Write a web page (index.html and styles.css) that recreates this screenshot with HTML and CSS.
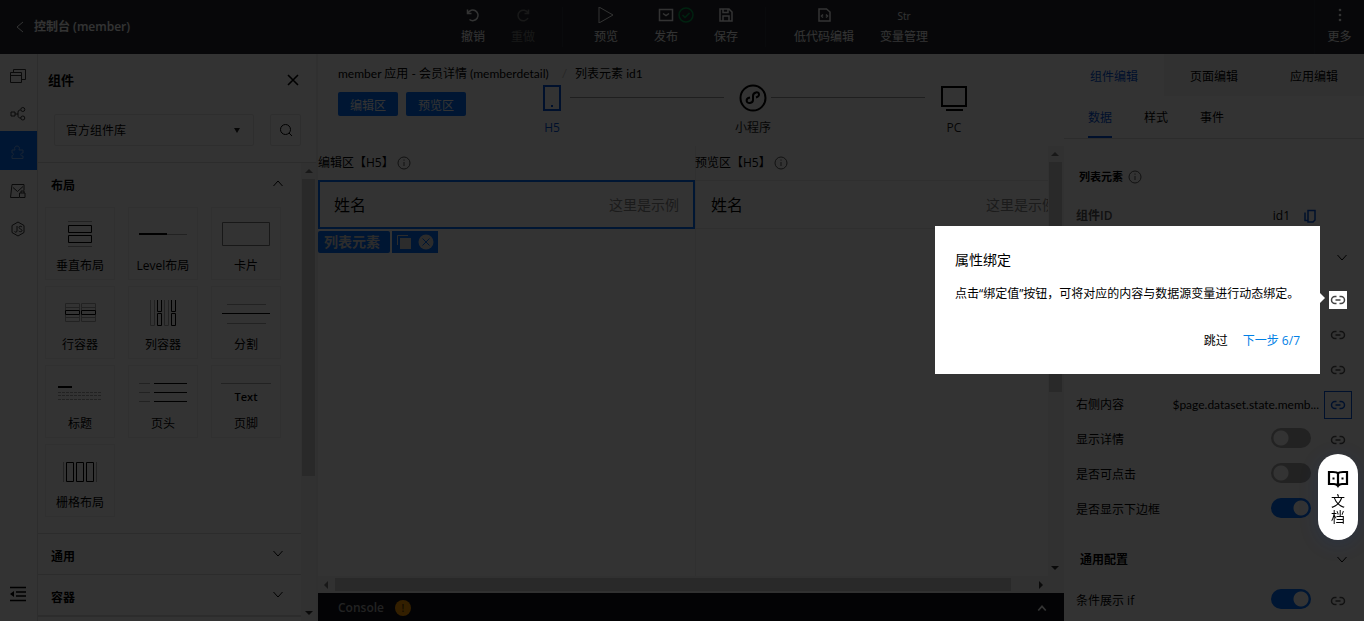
FILE: index.html
```html
<!DOCTYPE html>
<html lang="zh-CN">
<head>
<meta charset="utf-8">
<title>控制台</title>
<link rel="stylesheet" href="styles.css">
</head>
<body>
<svg class="defs" aria-hidden="true">
  <symbol id="link" viewBox="0 0 16 16"><path d="M6.500 11.500H5a3.500 3.500 0 0 1 0-7h1.500M9.500 4.500H11a3.500 3.500 0 0 1 0 7H9.500M5.500 8h5"/></symbol>
  <symbol id="down" viewBox="0 0 12 12"><path d="M1.500 3l4.500 5 4.500-5"/></symbol>
  <symbol id="up" viewBox="0 0 12 12"><path d="M1.500 9l4.500-5 4.500 5"/></symbol>
  <symbol id="info" viewBox="0 0 14 14"><circle cx="7" cy="7" r="6"/><path d="M7 6v4M7 3.500v1.200"/></symbol>
</svg>
<div class="app">
  <header class="top">
    <a class="back" href="#"><svg class="ico" width="10" height="12" viewBox="0 0 10 12"><path d="M8 1L2 6l6 5"/></svg>控制台 (member)</a>
    <nav class="tools">
      <button class="tool narrow"><svg class="ico" width="16" height="16" viewBox="0 0 16 16"><path d="M2.500 2.500v4h4M3 6a5.300 5.300 0 1 1 1.500 6.500" stroke-width="1.500"/></svg>撤销</button>
      <button class="tool narrow off"><svg class="ico" width="16" height="16" viewBox="0 0 16 16"><path d="M13.500 2.500v4h-4M13 6a5.300 5.300 0 1 0 0 5" stroke-width="1.500"/></svg>重做</button>
      <i class="sep"></i>
      <button class="tool"><svg class="ico" width="16" height="16" viewBox="0 0 16 16"><path d="M1 0l14 8-14 8z"/></svg>预览</button>
      <button class="tool"><svg class="ico" width="16" height="16" viewBox="0 0 16 16"><path d="M1.500 2.500h13v11h-13zM5 6.500l3 2 3-2" stroke-width="1.500"/></svg>发布<svg class="ok" width="16" height="16" viewBox="0 0 16 16"><circle cx="8" cy="8" r="7"/><path d="M4.500 8l2.500 2.500 4.500-4.500"/></svg></button>
      <button class="tool"><svg class="ico" width="16" height="16" viewBox="0 0 16 16"><path d="M2 2h9l3 3v9H2zM5 2v3.500h5V2M5 14V9h6v5" stroke-width="1.500"/></svg>保存</button>
      <i class="sep far"></i>
      <button class="tool wide"><svg class="ico" width="16" height="16" viewBox="0 0 16 16"><path d="M3 2h7.500L14 5v9H3zM7 7.500L5.500 9 7 10.500M10 7.500L11.500 9 10 10.500" stroke-width="1.500"/></svg>低代码编辑</button>
      <button class="tool wide"><span class="str">Str</span>变量管理</button>
    </nav>
    <button class="tool more"><svg class="dots" width="16" height="16" viewBox="0 0 16 16"><circle cx="8" cy="3" r="1.300"/><circle cx="8" cy="8" r="1.300"/><circle cx="8" cy="13" r="1.300"/></svg>更多</button>
  </header>
  <div class="body">
    <nav class="rail">
      <button class="railbtn" aria-label="页面"><svg class="ico" width="16" height="16" viewBox="0 0 16 16"><path d="M.500 4.500h11v10H.500zM.500 7.500h11M3.500 4.500v-3h12v10h-4"/></svg></button>
      <button class="railbtn" aria-label="结构"><svg class="ico" width="16" height="16" viewBox="0 0 16 16"><path d="M1 6h4v4H1zM5 8h3M10.500 4C8 4 8 5 8 8s0 4 3 4"/><circle cx="12.800" cy="3.500" r="2"/><circle cx="12.800" cy="12" r="2"/></svg></button>
      <button class="railbtn on" aria-label="组件"><svg class="ico" width="16" height="16" viewBox="0 0 16 16"><path d="M2 6h3c-1-2.500 0-4 2-4s3 1.500 2 4h4v3c-3-.500-3 3.500 0 3v2.500H2v-3c2 0 2-2.500 0-2.500z"/></svg></button>
      <button class="railbtn" aria-label="素材"><svg class="ico" width="16" height="16" viewBox="0 0 16 16"><path d="M9 14.500H.500L2 1.500h12v6M3 4.500l4.500 4L13 3.500M9.500 10h5.500v4.500H9.500zM11 10V8h3v2"/></svg></button>
      <button class="railbtn" aria-label="脚本"><svg class="ico" width="16" height="16" viewBox="0 0 16 16"><path d="M8 1l6 3.500v7L8 15l-6-3.500v-7zM7 5v5c0 1.500-2 1.500-2.500.500M12 6C11 4.800 9 5 9 6.500S12 8 12 9.500 9.500 11 8.700 10"/></svg></button>
      <button class="railbtn fold" aria-label="收起"><svg class="ico" width="18" height="16" viewBox="0 0 18 16"><path d="M1 1.500h16M7 6h10M7 10h10M1 14.500h16" stroke-width="1.700"/><path class="solid" d="M1 8l4-3v6z"/></svg></button>
    </nav>
    <aside class="panel">
      <div class="phead"><h2>组件</h2><button class="x" aria-label="关闭"><svg class="ico" width="12" height="12" viewBox="0 0 12 12"><path d="M1 1l10 10M11 1L1 11" stroke-width="1.600"/></svg></button></div>
      <div class="search">
        <select class="lib" aria-label="组件库"><option>官方组件库</option></select>
        <button class="find" aria-label="搜索"><svg class="ico" width="14" height="14" viewBox="0 0 14 14"><circle cx="6.500" cy="6.500" r="5"/><path d="M10 10l3 3"/></svg></button>
      </div>
      <div class="scroll">
        <div class="groups">
          <section class="group">
            <h3>布局<svg class="ico" width="12" height="12"><use href="#up"/></svg></h3>
            <div class="cards">
              <button class="card"><svg class="art" viewBox="0 0 50 30"><path d="M13.500 4.500h23v7h-23zM13.500 14.500h23v7h-23z"/><path class="thin" d="M13 .5h24M13 25.500h24"/></svg>垂直布局</button>
              <button class="card"><svg class="art" viewBox="0 0 50 30"><path d="M1 13h28" stroke-width="2"/><path class="thin" d="M29 13.500h20"/></svg>Level布局</button>
              <button class="card"><svg class="art" viewBox="0 0 50 30"><path class="mid" d="M1.500 1.500h47v23h-47z"/></svg>卡片</button>
              <button class="card"><svg class="art" viewBox="0 0 50 30"><path d="M10.500 10.500h14v4h-14zM26.500 10.500h14v4h-14z"/><path class="thin" d="M10.500 10V3.500h14V10M26.500 10V3.500h14V10M10.500 15v6.500h14V15M26.500 15v6.500h14V15M10.500 7.500h14M26.500 7.500h14M10.500 17.500h14M26.500 17.500h14"/></svg>行容器</button>
              <button class="card"><svg class="art" viewBox="0 0 50 30"><path d="M19.500-.5h4v12h-4zM19.500 13.500h4v12h-4zM33.500-.5h4v12h-4zM33.500 13.500h4v12h-4z"/><path class="thin" d="M12.500-.5h4v26h-4zM26.500-.5h4v26h-4z"/></svg>列容器</button>
              <button class="card"><svg class="art" viewBox="0 0 50 30"><path d="M1 13.500h48"/><path class="thin" d="M6 4.500h39M6 23.500h39"/></svg>分割</button>
              <button class="card"><svg class="art" viewBox="0 0 50 30"><path d="M3 8h14" stroke-width="2"/><path class="thin dash" d="M3 13.500h44M3 16.500h44M3 20.500h44"/></svg>标题</button>
              <button class="card"><svg class="art" viewBox="0 0 50 30"><path d="M16 4.500h33M16 13.500h33M16 22.500h33"/><path class="thin" d="M1 4.500h11M1 13.500h11M1 22.500h11"/></svg>页头</button>
              <button class="card"><span class="art txt">Text</span>页脚</button>
              <button class="card"><svg class="art" viewBox="0 0 50 30"><path d="M18.500 4.500h-7v19h7zM21.500 4.500h7v19h-7zM31.500 4.500h7v19h-7z"/><path class="thin" d="M8.500 4v20M41.500 4v20"/></svg>栅格布局</button>
            </div>
          </section>
          <section class="group"><h3>通用<svg class="ico" width="12" height="12"><use href="#down"/></svg></h3></section>
          <section class="group"><h3>容器<svg class="ico" width="12" height="12"><use href="#down"/></svg></h3></section>
          <section class="group"></section>
        </div>
        <div class="vbar"><i class="arr au"></i><i class="thumb tall"></i><i class="arr ad"></i></div>
      </div>
    </aside>
    <main class="main">
      <div class="mhead">
        <div class="left">
          <p class="crumb">member 应用 - 会员详情 (memberdetail)<span class="slash">/</span>列表元素 id1</p>
          <div class="btns"><button class="blue">编辑区</button><button class="blue">预览区</button></div>
        </div>
        <div class="devices">
          <button class="dev on"><svg class="devico" width="28" height="28" viewBox="0 0 28 28"><path d="M6 2h16v24H6z"/><path d="M14 21v2"/></svg>H5</button>
          <i class="wire"></i>
          <button class="dev"><svg class="devico" width="28" height="28" viewBox="0 0 28 28"><circle cx="14" cy="14" r="12.500"/><path d="M11 13.500c-5 1-4 6 0 5.500 2-.300 3-1.500 3-3v-4c0-4 6-5 6-1.500 0 2-1.500 2.500-3 3"/></svg>小程序</button>
          <i class="wire"></i>
          <button class="dev"><svg class="devico" width="28" height="28" viewBox="0 0 28 28"><path d="M2 3h24v19H2zM6 26h17"/></svg>PC</button>
        </div>
      </div>
      <div class="work">
        <div class="canvas">
          <section class="pane">
            <h4>编辑区【H5】<svg class="info" width="14" height="14"><use href="#info"/></svg></h4>
            <div class="cell sel"><span>姓名</span><span class="val">这里是示例</span></div>
            <div class="tags"><span class="tag">列表元素</span><span class="acts"><svg width="16" height="16" viewBox="0 0 16 16"><path class="w" d="M4 4h11v11H4z"/><path class="wl" d="M1.500 11V1.500H12"/></svg><svg width="16" height="16" viewBox="0 0 16 16"><circle class="w" cx="8" cy="8" r="7.500"/><path class="bl" d="M4.500 4.500l7 7M11.500 4.500l-7 7"/></svg></span></div>
          </section>
          <section class="pane">
            <h4>预览区【H5】<svg class="info" width="14" height="14"><use href="#info"/></svg></h4>
            <div class="cell"><span>姓名</span><span class="val">这里是示例</span></div>
          </section>
        </div>
        <div class="vbar"><i class="arr au"></i><i class="thumb mid"></i><i class="arr ad"></i></div>
      </div>
      <div class="hbar"><i class="arr al"></i><i class="thumb"></i><i class="arr ar"></i></div>
      <footer class="console">Console<span class="warn">!</span><svg class="ico" width="10" height="10" viewBox="0 0 12 12"><path d="M1.500 9l4.500-5 4.500 5" stroke-width="2"/></svg></footer>
    </main>
    <aside class="props">
      <div class="tabs"><button class="on">组件编辑</button><button>页面编辑</button><button>应用编辑</button></div>
      <div class="subs"><button class="on">数据</button><button>样式</button><button>事件</button></div>
      <h3 class="ptitle">列表元素<svg class="info" width="14" height="14"><use href="#info"/></svg></h3>
      <div class="row idrow"><span class="dim">组件ID</span><span class="idv">id1</span><svg class="copy" width="12" height="14" viewBox="0 0 12 14"><path d="M1 3.500v8h3.500M4 1.500h7v9.500l-2 2H4z"/></svg></div>
      <div class="sect first"><svg class="ico" width="12" height="12"><use href="#down"/></svg></div>
      <div class="row"></div>
      <div class="row"><button class="lk" aria-label="绑定值"><svg class="link" width="16" height="16"><use href="#link"/></svg></button></div>
      <div class="row"><button class="lk" aria-label="绑定值"><svg class="link" width="16" height="16"><use href="#link"/></svg></button></div>
      <div class="row"><span>右侧内容</span><span class="expr">$page.dataset.state.memb...</span><button class="lk act" aria-label="绑定值"><svg class="link" width="16" height="16"><use href="#link"/></svg></button></div>
      <div class="row"><label for="a">显示详情</label><input class="sw" type="checkbox" id="a"><button class="lk" aria-label="绑定值"><svg class="link" width="16" height="16"><use href="#link"/></svg></button></div>
      <div class="row"><label for="b">是否可点击</label><input class="sw alone" type="checkbox" id="b"></div>
      <div class="row"><label for="c">是否显示下边框</label><input class="sw alone" type="checkbox" id="c" checked></div>
      <div class="sect">通用配置<svg class="ico" width="12" height="12"><use href="#down"/></svg></div>
      <div class="row"><label for="d">条件展示 if</label><input class="sw" type="checkbox" id="d" checked><button class="lk" aria-label="绑定值"><svg class="link" width="16" height="16"><use href="#link"/></svg></button></div>
    </aside>
  </div>
</div>
<div class="mask"></div>
<button class="spot" aria-label="绑定值"><svg class="link" width="16" height="16"><use href="#link"/></svg></button>
<div class="tip" role="dialog" aria-labelledby="tt">
  <h2 id="tt">属性绑定</h2>
  <p>点击“绑定值”按钮，可将对应的内容与数据源变量进行动态绑定。</p>
  <div class="tipbtns"><button>跳过</button><button class="next">下一步 6/7</button></div>
</div>
<a class="doc" href="#"><svg width="22" height="18" viewBox="0 0 22 18"><path d="M11 3.500C10 2 8 2 6 2H2v12h5c2 0 3 .5 4 2 1-1.500 2-2 4-2h5V2h-4c-2 0-4 0-5 1.500zM11 3v13M5.500 8.500h2M14.500 8.500h2"/></svg><span>文</span><span>档</span></a>
</body>
</html>
```
FILE: styles.css
```css
* { box-sizing: border-box; }
body { margin: 0; font: 12px/18px "Open Sans", "Noto Sans CJK SC", sans-serif; color: #000; background: #fff; overflow: hidden; }
h2, h3, h4, p { margin: 0; }
button { font: inherit; color: inherit; border: 0; padding: 0; background: none; }
a { color: inherit; text-decoration: none; }
svg { fill: none; stroke: currentColor; flex: none; }
.defs { position: absolute; width: 0; height: 0; }
.app { display: flex; flex-direction: column; height: 100vh; overflow: hidden; }

.top { display: flex; flex: none; height: 54px; background: #23272f; color: #fff; }
.back { display: flex; align-items: center; gap: 9px; width: 448px; padding-left: 15px; font-weight: 600; }
.tools { display: flex; align-items: center; }
.tool { position: relative; display: flex; flex-direction: column; align-items: center; gap: 5px; width: 60px; height: 40px; }
.tool.narrow { width: 50px; }
.tool.wide { width: 80px; }
.tool.off { color: #777; }
.sep { width: 1px; height: 40px; margin: 0 13px 0 14px; background: #30343d; }
.sep.far { margin: 0 18px 0 9px; }
.str { height: 16px; line-height: 18px; font-size: 10px; }
.ok { position: absolute; left: 42px; top: 0; color: #00a84f; stroke-width: 1.500; }
.more { width: 50px; height: 54px; padding-top: 7px; margin-left: auto; border-left: 1px solid #2b2f38; }
.dots { fill: currentColor; stroke: none; }

.body { display: flex; flex: 1; min-height: 0; }
.rail { display: flex; flex-direction: column; flex: none; width: 38px; padding-top: 1px; border-right: 1px solid #e0e0e0; }
.railbtn { display: flex; align-items: center; justify-content: center; width: 37px; height: 38px; padding: 3px 2px 0 0; color: #333; }
.railbtn.on { height: 39px; background: #006eff; color: #7ab2ff; }
.fold { margin-top: auto; margin-bottom: 10px; color: #000; }
.solid { fill: currentColor; stroke: none; }

.panel { display: flex; flex-direction: column; flex: none; width: 280px; border-right: 2px solid #eee; }
.phead { display: flex; justify-content: space-between; align-items: center; height: 51px; padding: 0 17px 0 10px; }
.phead h2 { font-size: 13px; font-weight: 700; }
.x { display: flex; }
.search { position: relative; display: flex; justify-content: space-between; padding: 9px 15px 16px 16px; border-bottom: 1px solid #ddd; }
.search::after { content: ""; position: absolute; left: 196px; top: 23px; border: 3px solid transparent; border-top: 5px solid #222; border-bottom: 0; }
.lib { width: 200px; height: 32px; padding: 2px 11px 0; font: inherit; color: #000; border: 1px solid #e5e5e5; border-radius: 2px; appearance: none; background: #fff; }
.find { display: flex; align-items: center; justify-content: center; width: 31px; height: 32px; border: 1px solid #e5e5e5; border-radius: 2px; }
.scroll { display: flex; flex: 1; min-height: 0; }
.groups { flex: 1; overflow: hidden; }
.group { border-bottom: 1px solid #ddd; }
.group h3 { display: flex; align-items: center; justify-content: space-between; height: 40px; padding: 5px 17px 0 13px; font-size: 12px; font-weight: 700; }
.group h3 .ico { margin-bottom: 6px; }
.cards { display: grid; grid-template-columns: repeat(3, 70px); gap: 6px 13px; padding: 4px 0 16px 7px; }
.card { display: flex; flex-direction: column; align-items: center; justify-content: space-between; height: 73px; padding: 13px 0 4px; border: 1px solid #eee; }
.art { width: 50px; height: 30px; }
.art .thin { stroke: #aaa; }
.art .mid { stroke: #777; }
.dash { stroke-dasharray: 3 1; }
.art.txt { height: 26px; margin: 4px 0 0; padding-top: 4px; font-size: 11px; font-weight: 600; border-top: 1px solid #aaa; }

.vbar { display: flex; flex-direction: column; align-items: center; flex: none; width: 15px; padding: 6px 0; background: #f4f4f4; }
.vbar .thumb { width: 13px; margin-top: 6px; background: #ccc; }
.thumb.tall { height: 297px; }
.thumb.mid { height: 230px; }
.arr { border: 4px solid transparent; }
.au { border-top: 0; border-bottom-color: #777; }
.ad { margin-top: auto; border-bottom: 0; border-top-color: #333; }
.al { border-left: 0; border-right-color: #777; }
.ar { margin-left: auto; border-right: 0; border-left-color: #333; }

.main { display: flex; flex-direction: column; flex: 1; min-width: 0; }
.mhead { position: relative; height: 92px; flex: none; padding: 11px 20px; }
.crumb { white-space: nowrap; font-family: Lato, "Noto Sans CJK SC", sans-serif; }
.slash { margin: 0 8px 0 13px; color: #bbb; }
.btns { display: flex; gap: 8px; margin-top: 9px; }
.blue { width: 60px; height: 24px; padding-top: 3px; border-radius: 2px; background: #006eff; color: #fff; }
.devices { position: absolute; left: 214px; right: 90px; top: 30px; display: flex; }
.dev { display: flex; flex-direction: column; align-items: center; gap: 7px; width: 40px; white-space: nowrap; color: #222; }
.devico { stroke-width: 2; color: #000; }
.dev.on, .dev.on .devico { color: #0052d9; }
.wire { flex: 1; height: 1px; margin: 13px 9px 0 -2px; background: #999; }
.work { display: flex; flex: 1; min-height: 0; }
.work .vbar { width: 16px; padding-right: 2px; }
.canvas { display: flex; flex: 1; min-width: 0; overflow: hidden; }
.pane { flex: 0 0 377px; box-shadow: 1px 0 #eee; }
.pane h4 { display: flex; align-items: center; gap: 3px; height: 34px; font-weight: 400; }
.info { color: #555; }
.cell { display: flex; justify-content: space-between; align-items: center; height: 49px; padding: 0 16px; border: solid #e8e8e8; border-width: 1px 0; font-size: 16px; }
.cell.sel { padding: 0 14px; border: 2px solid #006eff; }
.val { font-size: 14px; color: #888; }
.tags { display: flex; gap: 2px; margin-top: 2px; }
.tag { height: 22px; padding: 0 10px 0 6px; border-radius: 2px; line-height: 22px; font-size: 14px; font-weight: 700; color: #ddd; background: #006eff; }
.acts { display: flex; align-items: center; gap: 6px; padding: 0 4px; background: #006eff; }
.w { fill: #ddd; stroke: none; }
.wl { stroke: #ddd; }
.bl { stroke: #006eff; }
.hbar { display: flex; align-items: center; height: 17px; padding: 0 21px 0 6px; background: #f4f4f4; }
.hbar .thumb { width: 94%; height: 13px; margin: 0 28px 0 7px; background: #ccc; }
.console { display: flex; align-items: center; flex: none; height: 28px; padding: 2px 17px 0 20px; color: #aaa; background: #10121a; font-weight: 600; }
.warn { width: 16px; height: 16px; margin-left: 11px; border-radius: 8px; background: #ff9d00; color: #5a3700; font-size: 10px; line-height: 16px; text-align: center; }
.console .ico { margin-left: auto; color: #fff; }

.props { width: 300px; flex: none; }
.tabs { display: grid; grid-template-columns: repeat(3, 1fr); height: 42px; }
.tabs button { background: #f5f5f5; padding-top: 4px; }
.tabs .on { background: #fff; }
.on { color: #0052d9; }
.subs { display: flex; gap: 32px; height: 43px; padding-left: 24px; }
.subs { border-bottom: 1px solid #ddd; }
.subs button { padding-top: 4px; border-bottom: 2px solid transparent; }
.subs .on { border-color: #0052d9; }
.ptitle { display: flex; align-items: center; gap: 5px; height: 59px; padding: 16px 0 0 15px; font-size: 11px; }
.row { display: flex; align-items: center; height: 35px; padding: 0 12px; }
.idrow .dim { color: #555; font-weight: 600; }
.idv { margin-left: auto; }
.copy { margin: 0 36px 0 14px; color: #0052d9; stroke-width: 1.500; }
.sect { display: flex; align-items: center; justify-content: space-between; height: 56px; padding: 10px 16px 0; font-weight: 700; }
.sect.first { height: 49px; justify-content: flex-end; padding-top: 0; }
.lk { display: flex; align-items: center; justify-content: center; width: 28px; height: 28px; margin-left: auto; color: #555; }
.link { stroke-width: 1.500; }
.act { border: 1px solid #0052d9; color: #0052d9; }
.expr { margin-left: auto; font-family: Lato, sans-serif; }
.expr + .lk { margin-left: 5px; }
.sw { appearance: none; width: 40px; height: 20px; margin: 0 0 4px auto; border-radius: 10px; background: radial-gradient(circle at 10px 10px, #fff 7px, transparent 8px) #aaa; }
.sw:checked { background: radial-gradient(circle at 30px 10px, #fff 7px, transparent 8px) #006eff; }
.sw + .lk { margin-left: 13px; }
.sw.alone { margin-right: 41px; }

.mask { position: fixed; inset: 0; background: rgba(0, 0, 0, .8); }
.spot { position: absolute; right: 17px; top: 291px; display: flex; align-items: center; justify-content: center; width: 18px; height: 18px; background: #fff; color: #444; }
.tip { position: absolute; right: 44px; top: 226px; width: 385px; padding: 24px 20px; background: #fff; }
.tip::after { content: ""; position: absolute; left: 100%; top: 67px; border: 5px solid transparent; border-left-color: #fff; border-right: 0; }
.tip h2 { font-size: 14px; line-height: 20px; font-weight: 400; }
.tip p { margin: 15px 0 28px; white-space: nowrap; }
.tipbtns { display: flex; justify-content: flex-end; gap: 15px; }
.tipbtns button { height: 19px; }
.next { color: #0080e6; }
.doc { position: absolute; right: 6px; top: 454px; display: flex; flex-direction: column; align-items: center; width: 40px; height: 86px; padding-top: 16px; border-radius: 20px; background: #fff; font-size: 14px; line-height: 16px; box-shadow: 0 4px 20px rgba(0, 60, 160, .15); }
.doc svg { margin-bottom: 5px; stroke-width: 2.200; }
```
